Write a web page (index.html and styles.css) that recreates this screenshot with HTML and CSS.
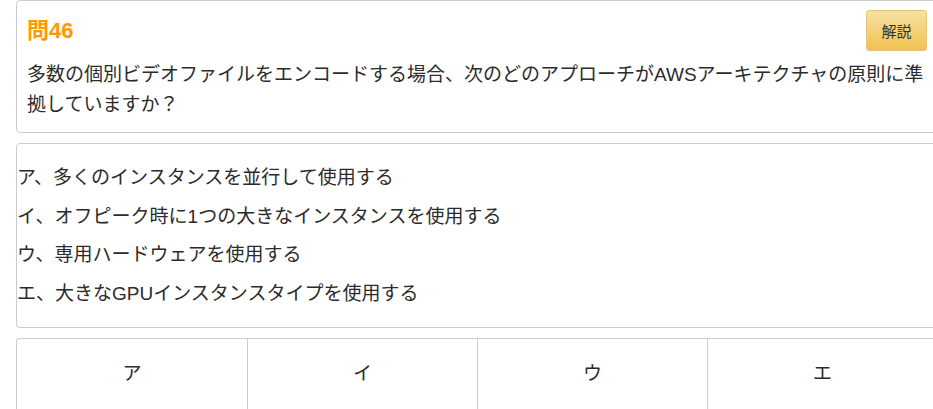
FILE: index.html
```html
<!DOCTYPE html>
<html lang="ja">
<head>
  <meta charset="UTF-8" />
  <meta name="viewport" content="width=device-width, initial-scale=1.0"/>
  <title>問46</title>
  <link rel="stylesheet" href="styles.css">
</head>
<body>
  <div id="main">
    <div class="card question-card">
      <div class="question-head">
        <h2 class="question-no">問46</h2>
        <button class="explain-btn">解説</button>
      </div>
      <p class="question-text">多数の個別ビデオファイルをエンコードする場合、次のどのアプローチがAWSアーキテクチャの原則に準拠していますか？</p>
    </div>

    <div class="card choice-card">
      <div class="choice">ア、多くのインスタンスを並行して使用する</div>
      <div class="choice">イ、オフピーク時に1つの大きなインスタンスを使用する</div>
      <div class="choice">ウ、専用ハードウェアを使用する</div>
      <div class="choice">エ、大きなGPUインスタンスタイプを使用する</div>
    </div>

    <div class="card answer-card">
      <div class="answer">ア</div>
      <div class="answer">イ</div>
      <div class="answer">ウ</div>
      <div class="answer">エ</div>
    </div>
  </div>
</body>
</html>
```

FILE: styles.css
```css
* {
  margin: 0;
  padding: 0;
  box-sizing: border-box;
  font-family: 'Liberation Sans', 'Noto Sans CJK JP', sans-serif;
}

html, body {
  background: #fff;
  overflow: hidden;
}

body {
  color: #2b2b2b;
}

#main {
  width: 922px;
  margin-left: 16px;
  display: flex;
  flex-direction: column;
  gap: 10px;
}

.card {
  border: 1px solid #ccc;
  border-radius: 4px;
  background: #fff;
}

.question-card {
  padding: 9px 10px 12px 10px;
}

.question-head {
  display: flex;
  justify-content: space-between;
  align-items: center;
}

.question-no {
  color: #ff9900;
  font-size: 22px;
  font-weight: 700;
  line-height: 24px;
}

.explain-btn {
  width: 61px;
  height: 41px;
  border: 1px solid #e2c67a;
  border-radius: 3px;
  background: linear-gradient(to bottom, #f8e0a2, #f0c24f);
  color: #333;
  font-size: 15px;
  cursor: pointer;
}

.question-text {
  margin-top: 9px;
  font-size: 19px;
  line-height: 30px;
}

.choice-card {
  padding: 15px 0 14px 0;
}

.choice {
  font-size: 19px;
  line-height: 38.5px;
}

.answer-card {
  display: grid;
  grid-template-columns: repeat(4, 1fr);
  border-bottom: none;
  border-radius: 4px 4px 0 0;
}

.answer {
  text-align: center;
  font-size: 19px;
  line-height: 26px;
  padding: 22px 0 22px 0;
  border-left: 1px solid #ccc;
}

.answer:first-child {
  border-left: none;
}
```
